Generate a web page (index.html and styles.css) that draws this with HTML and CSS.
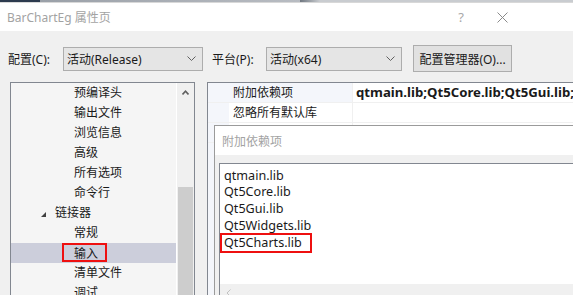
FILE: index.html
```html
<!DOCTYPE html>
<html lang="zh-CN">
<head>
  <meta charset="UTF-8">
  <title>BarChartEg 属性页</title>
  <link rel="stylesheet" href="styles.css">
</head>
<body>
  <div class="topstrip"></div>
  <div class="titlebar">
    <span class="title">BarChartEg 属性页</span>
    <span class="help">?</span>
    <svg class="close" width="11" height="11" viewBox="0 0 11 11">
      <path d="M0.5 0.5 L10.5 10.5 M10.5 0.5 L0.5 10.5" stroke="#8a8a8a" stroke-width="1" fill="none"/>
    </svg>
  </div>

  <div class="window">
    <div class="toolbar">
      <span class="label">配置(C):</span>
      <div class="combo combo-config">
        <span>活动(Release)</span>
        <svg class="chevron" width="9" height="5" viewBox="0 0 9 5"><path d="M0.5 0.5 L4.5 4.5 L8.5 0.5" stroke="#606060" fill="none"/></svg>
      </div>
      <span class="label label-platform">平台(P):</span>
      <div class="combo combo-platform">
        <span>活动(x64)</span>
        <svg class="chevron" width="9" height="5" viewBox="0 0 9 5"><path d="M0.5 0.5 L4.5 4.5 L8.5 0.5" stroke="#606060" fill="none"/></svg>
      </div>
      <button class="btn">配置管理器(O)...</button>
    </div>

    <div class="panes">
      <div class="tree">
        <ul class="tree-list">
          <li class="item lvl2">预编译头</li>
          <li class="item lvl2">输出文件</li>
          <li class="item lvl2">浏览信息</li>
          <li class="item lvl2">高级</li>
          <li class="item lvl2">所有选项</li>
          <li class="item lvl2">命令行</li>
          <li class="item lvl1"><span class="twisty"></span>链接器</li>
          <li class="item lvl2">常规</li>
          <li class="item selected"><span class="mark">输入</span></li>
          <li class="item lvl2">清单文件</li>
          <li class="item lvl2">调试</li>
        </ul>
        <div class="vscroll">
          <svg class="arrow-up" width="7" height="5" viewBox="0 0 7 5"><path d="M0.5 4.5 L3.5 1.2 L6.5 4.5" stroke="#606060" stroke-width="1.6" fill="none"/></svg>
          <div class="thumb"></div>
        </div>
      </div>

      <div class="props">
        <div class="prop-row first">
          <div class="gutter"></div>
          <div class="name">附加依赖项</div>
          <div class="value bold">qtmain.lib;Qt5Core.lib;Qt5Gui.lib;Qt5Widgets.lib</div>
        </div>
        <div class="prop-row">
          <div class="gutter"></div>
          <div class="name">忽略所有默认库</div>
          <div class="value"></div>
        </div>
        <div class="prop-row">
          <div class="gutter"></div>
          <div class="name">忽略特定默认库</div>
          <div class="value"></div>
        </div>
      </div>
    </div>
  </div>

  <div class="dialog">
    <div class="dialog-title">
      <span class="title">附加依赖项</span>
      <span class="help">?</span>
    </div>
    <div class="dialog-body">
      <div class="textbox">
        <div class="lines">
          <div class="line">qtmain.lib</div>
          <div class="line">Qt5Core.lib</div>
          <div class="line">Qt5Gui.lib</div>
          <div class="line">Qt5Widgets.lib</div>
          <div class="line marked">Qt5Charts.lib</div>
        </div>
        <div class="hscroll">
          <svg width="5" height="8" viewBox="0 0 5 8"><path d="M4.5 0.5 L1 4 L4.5 7.5" stroke="#c2c2c2" fill="none"/></svg>
        </div>
      </div>
    </div>
  </div>
</body>
</html>
```

FILE: styles.css
```css
* {
  margin: 0;
  padding: 0;
  box-sizing: border-box;
}

body {
  width: 573px;
  height: 295px;
  overflow: hidden;
  position: relative;
  background: #f0f0f0;
  font-family: "Noto Sans", "Noto Sans CJK SC", sans-serif;
  font-size: 12px;
  color: #1a1a1a;
}

.topstrip {
  height: 2px;
  background: linear-gradient(90deg, #2c3a4e 0, #2c3a4e 40px, #9aa0a8 40px, #b8bcc2 300px, #6f7780 300px, #c9ccd0 320px, #c9ccd0 100%);
}

.titlebar {
  height: 29px;
  background: #fff;
  display: flex;
  align-items: center;
  padding-left: 7px;
  border-top: 1px solid #d8d8d8;
}

.title {
  color: #a3a3a3;
  font-size: 12px;
  white-space: nowrap;
  flex-shrink: 0;
}

.titlebar .help {
  margin-left: auto;
  color: #a8a8a8;
  font-size: 13px;
  margin-right: 33px;
}

.titlebar .close {
  margin-right: 65px;
}

.window {
  height: 264px;
}

.toolbar {
  display: flex;
  align-items: center;
  height: 27px;
  margin-top: 14px;
  padding-left: 8px;
}

.label {
  width: 55px;
}

.label-platform {
  margin-left: 9px;
  width: 54px;
}

.combo {
  height: 24px;
  background: #e5e5e5;
  border: 1px solid #adadad;
  display: flex;
  align-items: center;
  padding: 0 6px 0 3px;
}

.combo .chevron {
  margin-left: auto;
}

.combo-config {
  width: 140px;
}

.combo-platform {
  width: 136px;
}

.btn {
  margin-left: 11px;
  width: 99px;
  height: 27px;
  background: #e1e1e1;
  border: 1px solid #adadad;
  font-family: inherit;
  font-size: 12px;
  color: #1a1a1a;
}

.panes {
  display: flex;
  margin-top: 10px;
  padding-left: 10px;
  gap: 12px;
  height: 230px;
}

.tree {
  width: 186px;
  border: 1px solid #828790;
  border-bottom: none;
  display: flex;
  background: #f5f5f5;
}

.tree-list {
  list-style: none;
  width: 166px;
  border-right: 1px solid #fff;
}

.item {
  height: 20px;
  line-height: 20px;
  white-space: nowrap;
}

.lvl1 {
  padding-left: 30px;
  display: flex;
  align-items: center;
}

.lvl2 {
  padding-left: 63px;
}

.twisty {
  width: 0;
  height: 0;
  border-left: 5px solid transparent;
  border-bottom: 5px solid #404040;
  margin-right: 9px;
  margin-top: 3px;
}

.selected {
  background: #cccedb;
  padding-left: 51px;
}

.mark {
  display: inline-block;
  width: 45px;
  height: 19px;
  line-height: 17px;
  border: 2px solid #ee1010;
  padding-left: 10px;
  vertical-align: top;
}

.vscroll {
  width: 17px;
  background: #f0f0f0;
  display: flex;
  flex-direction: column;
  align-items: center;
}

.arrow-up {
  margin-top: 7px;
  margin-left: -1px;
}

.thumb {
  width: 15px;
  margin-top: 92px;
  margin-left: -1px;
  flex: 1;
  background: #cdcdcd;
}

.props {
  flex: 1;
  border-left: 1px solid #828790;
  border-top: 1px solid #828790;
  background: #f4f6fb;
}

.prop-row {
  display: flex;
  height: 20px;
  line-height: 19px;
  border-bottom: 1px solid #f0f0f0;
  white-space: nowrap;
}

.gutter {
  width: 21px;
  background: #f4f6fb;
}

.name {
  width: 123px;
  padding-left: 4px;
  background: #fff;
}

.prop-row.first .name {
  background: #f4f6fb;
}

.value {
  flex: 1;
  padding-left: 3px;
  background: #fff;
  border-left: 1px solid #f0f0f0;
  overflow: hidden;
}

.bold {
  font-weight: bold;
  font-size: 13.2px;
}

.dialog {
  position: absolute;
  left: 214px;
  top: 125px;
  width: 380px;
  height: 190px;
  border: 1px solid #9b9b9b;
  background: #f0f0f0;
}

.dialog-title {
  height: 29px;
  background: #fff;
  display: flex;
  align-items: center;
  padding-left: 7px;
}

.dialog-title .help {
  margin-left: 341px;
  color: #a8a8a8;
  font-size: 13px;
}

.dialog-body {
  padding: 8px 0 0 4px;
}

.textbox {
  border: 1px solid #828790;
  background: #fff;
  height: 160px;
}

.lines {
  height: 120px;
  padding-top: 3.5px;
  font-size: 12.6px;
}

.line {
  height: 16.8px;
  line-height: 16.8px;
  padding-left: 4px;
  white-space: nowrap;
}

.line.marked {
  width: 92px;
  height: 20px;
  line-height: 16px;
  border: 2px solid #ee1010;
  margin-top: -1.6px;
  padding-left: 2px;
}

.hscroll {
  height: 17px;
  background: #f0f0f0;
  display: flex;
  align-items: center;
  padding-left: 6px;
}
```
